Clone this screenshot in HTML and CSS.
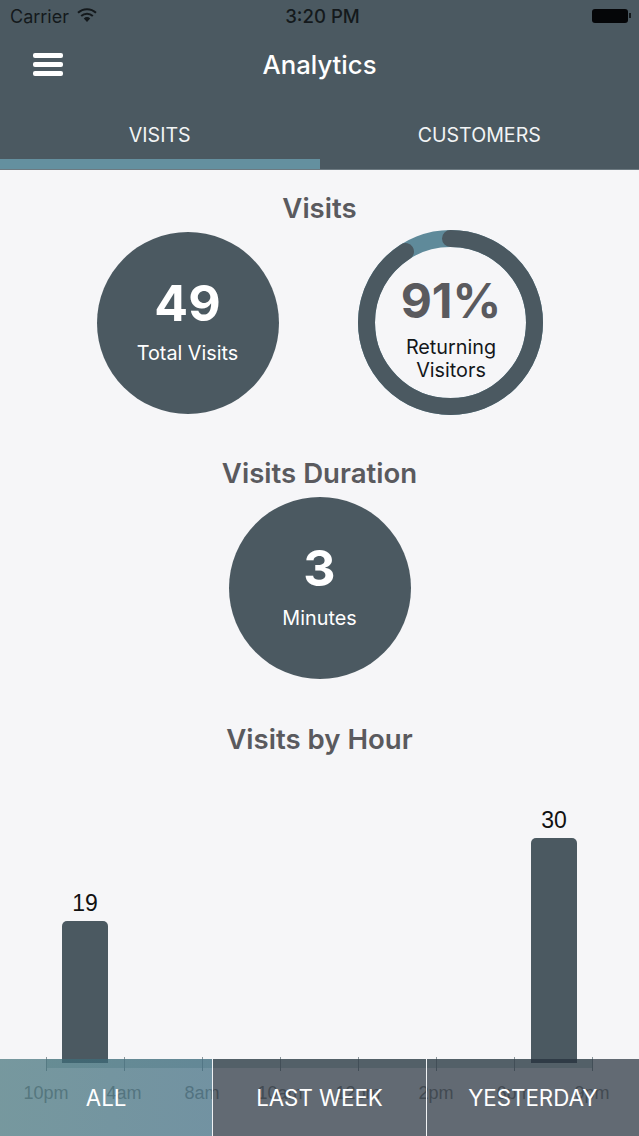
FILE: index.html
```html
<!DOCTYPE html>
<html lang="en">
<head>
    <meta charset="UTF-8">
    <meta name="viewport" content="width=device-width, initial-scale=1.0">
    <title>Analytics</title>
    <link rel="stylesheet" href="styles.css">
</head>
<body>

    <div class="screen">
        <header class="top">
            <!-- status bar -->
            <div class="status">
                <div class="carrier">
                    <span>Carrier</span>
                    <svg class="wifi" width="20" height="15" viewBox="0 0 20 15">
                        <path d="M1 4.8 A13 13 0 0 1 19 4.8" fill="none" stroke="#14191c" stroke-width="2"/>
                        <path d="M4.2 8 A8.5 8.5 0 0 1 15.8 8" fill="none" stroke="#14191c" stroke-width="2"/>
                        <path d="M6.8 10.4 A4.6 4.6 0 0 1 13.2 10.4 L10 14 Z" fill="#14191c"/>
                    </svg>
                </div>
                <div class="clock">3:20 PM</div>
                <div class="battery"><span class="battery-body"></span><span class="battery-nub"></span></div>
            </div>

            <div class="titlebar">
                <div class="burger"><span></span><span></span><span></span></div>
                <div class="title">Analytics</div>
            </div>

            <div class="tabs">
                <div class="tab active">VISITS</div>
                <div class="tab">CUSTOMERS</div>
            </div>
        </header>

        <main>
            <h2 class="heading first">Visits</h2>
            <div class="circle-row">
                <div class="circle">
                    <div class="num">49</div>
                    <div class="cap">Total Visits</div>
                </div>
                <div class="ring">
                    <svg class="ring-svg" width="185" height="185" viewBox="0 0 185 185">
                        <circle cx="92.5" cy="92.5" r="84" fill="none" stroke="#5f8a9a" stroke-width="17"/>
                        <circle class="ring-arc" cx="92.5" cy="92.5" r="84" fill="none" stroke="#4b5961" stroke-width="17" stroke-linecap="round" pathLength="100" stroke-dasharray="91 100"/>
                    </svg>
                    <div class="ring-text">
                        <div class="num dark">91%</div>
                        <div class="cap black">Returning<br>Visitors</div>
                    </div>
                </div>
            </div>

            <h2 class="heading second">Visits Duration</h2>
            <div class="circle-row tight">
                <div class="circle">
                    <div class="num">3</div>
                    <div class="cap">Minutes</div>
                </div>
            </div>

            <h2 class="heading third">Visits by Hour</h2>

            <!-- chart -->
            <div class="chart">
                <div class="bars">
                    <div class="bar-col"><span class="bar-val">19</span><div class="bar" style="height: 142px"></div></div>
                    <div class="bar-col"></div>
                    <div class="bar-col"></div>
                    <div class="bar-col"></div>
                    <div class="bar-col"></div>
                    <div class="bar-col"></div>
                    <div class="bar-col"><span class="bar-val">30</span><div class="bar" style="height: 225px"></div></div>
                </div>
                <div class="axis">
                    <div class="tick"><span>10pm</span></div>
                    <div class="tick"><span>4am</span></div>
                    <div class="tick"><span>8am</span></div>
                    <div class="tick"><span>10am</span></div>
                    <div class="tick"><span>12pm</span></div>
                    <div class="tick"><span>2pm</span></div>
                    <div class="tick"><span>6pm</span></div>
                    <div class="tick"><span>9pm</span></div>
                </div>
            </div>
        </main>

        <!-- range buttons sit over the chart -->
        <nav class="range">
            <div class="range-btn selected">ALL</div>
            <div class="range-btn">LAST WEEK</div>
            <div class="range-btn">YESTERDAY</div>
        </nav>
    </div>

</body>
</html>
```

FILE: styles.css
```css
body {
    margin: 0;
    padding: 0;
    background-color: #f6f6f8;
    font-family: Inter, "Liberation Sans", sans-serif;
}

.screen {
    position: relative;
    width: 639px;
    height: 1136px;
    overflow: hidden;
}

.top {
    height: 170px;
    background-color: #4b5961;
    border-bottom: 1px solid #6d7a81;
    box-sizing: border-box;
}

.status {
    display: grid;
    grid-template-columns: 1fr auto 1fr;
    align-items: center;
    height: 32px;
    padding: 0 8px 0 10px;
    color: #14191c;
    font-size: 18px;
}

.carrier {
    display: flex;
    align-items: center;
    gap: 8px;
}

.wifi {
    margin-top: -2px;
}

.clock {
    font-weight: 500;
    font-size: 18.6px;
    margin-left: 4px;
}

.battery {
    display: flex;
    align-items: center;
    justify-content: flex-end;
    gap: 1px;
    margin-top: -1px;
}

.battery-body {
    width: 36px;
    height: 14px;
    background-color: #050608;
    border-radius: 3px;
}

.battery-nub {
    width: 2px;
    height: 5px;
    background-color: #14191c;
}

.titlebar {
    display: flex;
    align-items: center;
    height: 66px;
    position: relative;
}

.burger {
    display: flex;
    flex-direction: column;
    gap: 4px;
    margin-left: 33px;
    margin-top: -2px;
}

.burger span {
    display: block;
    width: 30px;
    height: 5px;
    background-color: #fff;
    border-radius: 2px;
}

.title {
    position: absolute;
    left: 0;
    right: 0;
    margin-top: -2px;
    text-align: center;
    color: #fff;
    font-size: 25.7px;
    font-weight: 500;
}

.tabs {
    display: flex;
    height: 71px;
}

.tab {
    flex: 1;
    height: 61px;
    padding-top: 25px;
    box-sizing: border-box;
    text-align: center;
    color: #f2f4f5;
    font-size: 19.6px;
    line-height: 25px;
    border-bottom: 10px solid transparent;
}

.tab.active {
    height: 71px;
    border-bottom-color: #64909f;
}

.heading {
    margin: 0;
    text-align: center;
    color: #5a5a5e;
    font-size: 27.6px;
    font-weight: 600;
    line-height: 36px;
}

.heading.first {
    margin-top: 20px;
}

.heading.second {
    margin-top: 40px;
}

.heading.third {
    margin-top: 42px;
}

.circle-row {
    display: flex;
    justify-content: center;
    align-items: center;
    gap: 79px;
    margin-top: 4px;
}

.circle-row.tight {
    margin-top: 6px;
}

.circle {
    width: 182px;
    height: 182px;
    border-radius: 50%;
    background-color: #4b5961;
    color: #fff;
    display: flex;
    flex-direction: column;
    align-items: center;
    justify-content: center;
}

.num {
    font-size: 50px;
    font-weight: 700;
    line-height: 60px;
    margin-top: -8px;
}

.num.dark {
    color: #5a5a5e;
    font-size: 48px;
    margin-top: 0;
}

.cap {
    font-size: 19.8px;
    line-height: 23px;
    margin-top: 9px;
    text-align: center;
}

.cap.black {
    color: #14171a;
    margin-top: 5px;
}

.ring {
    position: relative;
    width: 185px;
    height: 185px;
}

.ring-svg {
    display: block;
}

.ring-arc {
    transform: rotate(-90deg);
    transform-origin: center;
}

.ring-text {
    position: absolute;
    top: 0;
    left: 0;
    right: 0;
    bottom: 0;
    padding: 8px 0 0 2px;
    box-sizing: border-box;
    display: flex;
    flex-direction: column;
    align-items: center;
    justify-content: center;
}

.chart {
    width: 547px;
    margin-left: 46px;
}

.bars {
    display: grid;
    grid-template-columns: repeat(7, 1fr);
    align-items: end;
    height: 306px;
    margin-bottom: -4px;
}

.bar-col {
    display: flex;
    flex-direction: column;
    align-items: center;
    position: relative;
    z-index: 1;
}

.bar-val {
    color: #111;
    font-family: "Liberation Sans", sans-serif;
    font-size: 23px;
    line-height: 26px;
    margin-bottom: 5px;
}

.bar {
    width: 46px;
    background-color: #4b5961;
    border-radius: 5px 5px 0 0;
}

.axis {
    display: flex;
    justify-content: space-between;
    height: 9px;
    background-color: #c4d2d2;
}

.tick {
    position: relative;
    width: 1px;
    height: 14px;
    margin-top: -2px;
    background-color: #8b969b;
}

.tick span {
    position: absolute;
    top: 25px;
    left: -40px;
    width: 80px;
    text-align: center;
    color: #8a8a8a;
    font-family: "Liberation Sans", sans-serif;
    font-size: 18px;
    line-height: 22px;
}

.range {
    position: absolute;
    left: 0;
    right: 0;
    bottom: 0;
    height: 77px;
    display: flex;
    z-index: 2;
}

.range-btn {
    flex: 1;
    display: flex;
    align-items: center;
    justify-content: center;
    color: #fff;
    font-size: 22.3px;
    background-color: rgba(36, 47, 59, 0.7);
    border-left: 1px solid #f0f2f4;
}

.range-btn.selected {
    background: linear-gradient(90deg, rgba(64, 112, 120, 0.7), rgba(58, 104, 125, 0.7));
    border-left: 0;
}
```
